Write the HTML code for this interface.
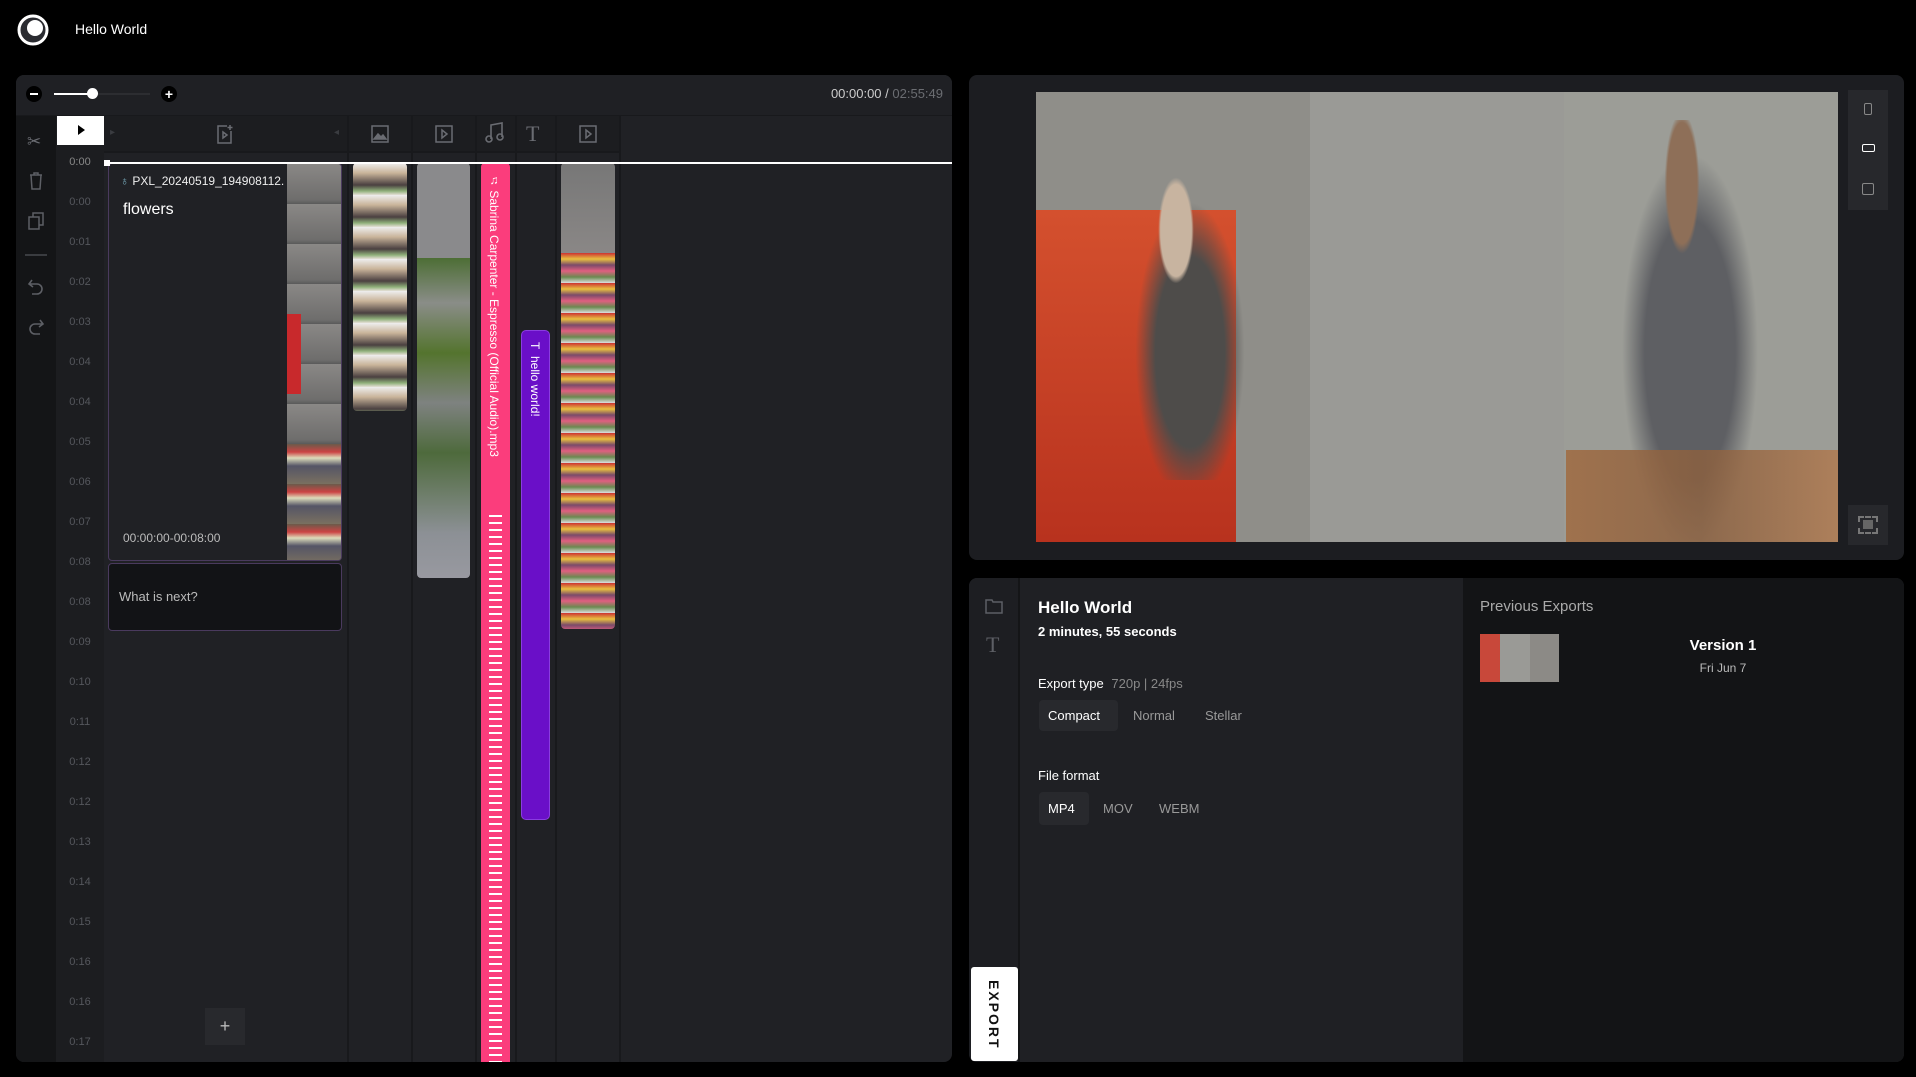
<!DOCTYPE html>
<html><head><meta charset="utf-8"><style>
*{margin:0;padding:0;box-sizing:border-box}
body{width:1916px;height:1077px;background:#000;font-family:"Liberation Sans",sans-serif;color:#fff;position:relative;overflow:hidden}
.a{position:absolute}
.lbl{position:absolute;left:56px;width:48px;text-align:center;font-size:11px;color:#55575d}
.sep{position:absolute;top:116px;bottom:15px;width:2px;background:#18191c}
.ic{position:absolute;color:#6a6c72}
</style></head><body>
<svg class="a" style="left:16px;top:13px" width="34" height="34" viewBox="0 0 34 34"><circle cx="17" cy="17" r="14" fill="#2a2b30" stroke="#fff" stroke-width="3"/><circle cx="19" cy="15" r="8" fill="#fff"/></svg>
<div class="a" style="left:75px;top:21px;font-size:14px">Hello World</div>

<div class="a" style="left:16px;top:75px;width:936px;height:987px;background:#202125;border-radius:8px;overflow:hidden">
  <div class="a" style="left:0;top:41px;width:40px;height:946px;background:#141517"></div>
  <div class="a" style="left:40px;top:41px;width:48px;height:946px;background:#1c1d20"></div>
  <div class="a" style="left:0;top:0;width:936px;height:41px;background:#1f2024;border-bottom:1px solid #18191c"></div>
</div>
<div class="a" style="left:26px;top:86px;width:16px;height:16px;border-radius:50%;background:#000"></div><div class="a" style="left:30px;top:93px;width:8px;height:2px;background:#fff"></div>
<div class="a" style="left:54px;top:93px;width:39px;height:2px;background:#fff"></div>
<div class="a" style="left:93px;top:93px;width:57px;height:2px;background:#2c2d31"></div>
<div class="a" style="left:87px;top:88px;width:11px;height:11px;border-radius:50%;background:#fff"></div>
<div class="a" style="left:161px;top:86px;width:16px;height:16px;border-radius:50%;background:#000;color:#fff;font-size:14px;line-height:16px;text-align:center;font-weight:bold">+</div>
<div class="a" style="left:770px;top:86px;width:173px;text-align:right;font-size:13px;color:#ccc">00:00:00 / <span style="color:#6b6d72">02:55:49</span></div>
<div class="ic" style="left:27px;top:132px;font-size:17px">✂</div>
<svg class="a" style="left:29px;top:172px" width="14" height="18" viewBox="0 0 14 18" fill="none" stroke="#5d5f65" stroke-width="1.5"><path d="M1 3h12M5 3V1h4v2M2 3l1 14h8l1-14"/></svg>
<svg class="a" style="left:28px;top:212px" width="16" height="18" viewBox="0 0 16 18" fill="none" stroke="#5d5f65" stroke-width="1.5"><rect x="1" y="5" width="10" height="12"/><path d="M5 5V1h10v12h-4"/></svg>
<div class="a" style="left:25px;top:254px;width:22px;height:2px;background:#3a3c40"></div>
<svg class="a" style="left:27px;top:278px" width="18" height="18" viewBox="0 0 18 18" fill="none" stroke="#5d5f65" stroke-width="1.6"><path d="M5 2L2 6l4 3M2 6h8a5 5 0 010 10H5"/></svg>
<svg class="a" style="left:27px;top:318px" width="18" height="18" viewBox="0 0 18 18" fill="none" stroke="#5d5f65" stroke-width="1.6"><path d="M13 2l3 4-4 3M16 6H8a5 5 0 000 10h5"/></svg>
<div class="a" style="left:57px;top:116px;width:47px;height:29px;background:#fff"></div>
<div class="a" style="left:78px;top:125px;width:0;height:0;border-left:7px solid #000;border-top:5px solid transparent;border-bottom:5px solid transparent"></div>
<div class="a" style="left:104px;top:116px;width:516px;height:37px;background:#1c1d20;border-bottom:2px solid #18191c"></div>
<div class="a" style="left:110px;top:127px;font-size:10px;color:#3a3c40">▸</div>
<div class="a" style="left:334px;top:127px;font-size:10px;color:#3a3c40">◂</div>
<svg class="a" style="left:216px;top:124px" width="18" height="20" viewBox="0 0 18 20" fill="none" stroke="#6a6c72" stroke-width="1.5"><path d="M11 2H2v17h13V7"/><path d="M7 8l4 3-4 3z"/><path d="M14 1v5M11.5 3.5h5"/></svg>
<svg class="a" style="left:371px;top:125px" width="18" height="18" viewBox="0 0 18 18" fill="none" stroke="#6a6c72" stroke-width="1.5"><rect x="1" y="1" width="16" height="16"/><path d="M3 14l4-5 3 3 2-2 3 4z" fill="#6a6c72"/></svg>
<svg class="a" style="left:435px;top:125px" width="18" height="18" viewBox="0 0 18 18" fill="none" stroke="#6a6c72" stroke-width="1.5"><rect x="1" y="1" width="16" height="16"/><path d="M7 5l5 4-5 4z"/></svg>
<svg class="a" style="left:485px;top:122px" width="20" height="22" viewBox="0 0 20 22" fill="none" stroke="#6a6c72" stroke-width="1.6"><path d="M6 17V3l11-2v14"/><circle cx="4" cy="17" r="3"/><circle cx="15" cy="15" r="3"/></svg>
<div class="ic" style="left:526px;top:121px;font-size:22px;font-family:'Liberation Serif',serif">T</div>
<svg class="a" style="left:579px;top:125px" width="18" height="18" viewBox="0 0 18 18" fill="none" stroke="#6a6c72" stroke-width="1.5"><rect x="1" y="1" width="16" height="16"/><path d="M7 5l5 4-5 4z"/></svg>
<div class="sep" style="left:347px"></div><div class="sep" style="left:411px"></div><div class="sep" style="left:475px"></div><div class="sep" style="left:515px"></div><div class="sep" style="left:555px"></div><div class="sep" style="left:619px"></div>
<div class="lbl" style="top:156px;color:#888">0:00</div>
<div class="lbl" style="top:196px">0:00</div><div class="lbl" style="top:236px">0:01</div><div class="lbl" style="top:276px">0:02</div><div class="lbl" style="top:316px">0:03</div><div class="lbl" style="top:356px">0:04</div><div class="lbl" style="top:396px">0:04</div><div class="lbl" style="top:436px">0:05</div><div class="lbl" style="top:476px">0:06</div><div class="lbl" style="top:516px">0:07</div><div class="lbl" style="top:556px">0:08</div><div class="lbl" style="top:596px">0:08</div><div class="lbl" style="top:636px">0:09</div><div class="lbl" style="top:676px">0:10</div><div class="lbl" style="top:716px">0:11</div><div class="lbl" style="top:756px">0:12</div><div class="lbl" style="top:796px">0:12</div><div class="lbl" style="top:836px">0:13</div><div class="lbl" style="top:876px">0:14</div><div class="lbl" style="top:916px">0:15</div><div class="lbl" style="top:956px">0:16</div><div class="lbl" style="top:996px">0:16</div><div class="lbl" style="top:1036px">0:17</div>
<div class="a" style="left:108px;top:163px;width:234px;height:398px;background:#202125;border:1px solid #4a3a5e;border-radius:4px;overflow:hidden">
  <div class="a" style="right:0;top:0;width:54px;height:398px;background:repeating-linear-gradient(180deg,#8a8886 0,#6e6d6c 36px,#5a5a5a 40px),#777"></div>
  <div class="a" style="right:0;top:150px;width:54px;height:80px;background:linear-gradient(90deg,#c8292c 0 14px,transparent 14px)"></div>
  <div class="a" style="right:0;top:280px;width:54px;height:118px;background:repeating-linear-gradient(180deg,#6b5a4a 0,#c44 8px,#ddb 14px,#556 22px,#7a7060 40px)"></div>
</div>
<div class="a" style="left:120px;top:174px;font-size:12px;color:#eee"><span style="color:#7ab">♁</span> PXL_20240519_194908112.</div>
<div class="a" style="left:123px;top:201px;font-size:16px;color:#fff">flowers</div>
<div class="a" style="left:123px;top:531px;font-size:12px;color:#bbb">00:00:00-00:08:00</div>
<div class="a" style="left:108px;top:563px;width:234px;height:68px;background:#121316;border:1px solid #4a3a5e;border-radius:4px"></div>
<div class="a" style="left:119px;top:589px;font-size:13px;color:#bbb">What is next?</div>
<div class="a" style="left:353px;top:163px;width:54px;height:248px;border-radius:4px;background:repeating-linear-gradient(180deg,#eee 0,#c9b49a 10px,#4a4040 22px,#8fb07a 28px,#e6e0d8 32px)"></div>
<div class="a" style="left:417px;top:163px;width:53px;height:415px;border-radius:4px;background:linear-gradient(180deg,#8a8a8c 0 95px,#4d6e35 95px,#8a8d88 140px,#54742e 190px,#7e8280 240px,#4e6a3c 290px,#8c9095 370px,#9899a0 415px)"></div>
<div class="a" style="left:481px;top:163px;width:29px;height:899px;background:#fb3d7c;border-radius:4px 4px 0 0"></div>
<div class="a" style="left:489px;top:515px;width:13px;height:547px;background:repeating-linear-gradient(180deg,#fff 0 2px,transparent 2px 7px)"></div>
<div class="a" style="left:487px;top:173px;font-size:12px;color:#fff;writing-mode:vertical-rl;white-space:nowrap">♫ Sabrina Carpenter - Espresso (Official Audio).mp3</div>
<div class="a" style="left:521px;top:330px;width:29px;height:490px;background:#6a0fc8;border:1px solid #8a3de0;border-radius:5px"></div>
<div class="a" style="left:528px;top:342px;font-size:12px;color:#fff;writing-mode:vertical-rl;white-space:nowrap">T&nbsp;&nbsp;hello world!</div>
<div class="a" style="left:561px;top:163px;width:54px;height:466px;border-radius:4px;background:linear-gradient(180deg,#777 0,#8a8786 90px,transparent 90px),repeating-linear-gradient(180deg,#c33 0,#e8c040 6px,#7a4a6a 12px,#e06080 18px,#6a8a50 24px,#ddd 30px)"></div>
<div class="a" style="left:106px;top:162px;width:846px;height:2px;background:#fff"></div>
<div class="a" style="left:104px;top:160px;width:6px;height:6px;background:#fff"></div>
<div class="a" style="left:205px;top:1008px;width:40px;height:37px;background:#28292d;color:#bbb;text-align:center;line-height:37px;font-size:18px">+</div>

<div class="a" style="left:969px;top:75px;width:935px;height:485px;background:#1c1d21;border-radius:8px"></div>
<div class="a" style="left:1036px;top:92px;width:802px;height:450px;background:linear-gradient(90deg,#8f8e89 0 274px,#9a9a96 274px 528px,#9c9d97 528px 802px)"></div>
<div class="a" style="left:1036px;top:210px;width:200px;height:332px;background:linear-gradient(180deg,#d4502e,#b8321e);"></div>
<div class="a" style="left:1120px;top:160px;width:140px;height:320px;background:radial-gradient(ellipse at 40% 22%,#c8b4a0 0 13%,transparent 15%),radial-gradient(ellipse at 50% 60%,#4e4c4a 0 35%,transparent 55%)"></div>
<div class="a" style="left:1610px;top:120px;width:160px;height:420px;background:radial-gradient(ellipse at 45% 15%,#8e6f58 0 12%,transparent 14%),radial-gradient(ellipse at 50% 55%,#5e5f63 0 40%,transparent 60%)"></div>
<div class="a" style="left:1566px;top:450px;width:272px;height:92px;background:linear-gradient(90deg,#a06a40,#8a6040 50%,#b07a50);opacity:.85"></div>
<div class="a" style="left:1848px;top:90px;width:40px;height:120px;background:#27282c"></div>
<div class="a" style="left:1864px;top:103px;width:8px;height:12px;border:1.5px solid #888;border-radius:2px"></div>
<div class="a" style="left:1862px;top:144px;width:13px;height:8px;border:1.5px solid #fff;border-radius:2px"></div>
<div class="a" style="left:1862px;top:183px;width:12px;height:12px;border:1.5px solid #888;border-radius:2px"></div>
<div class="a" style="left:1848px;top:505px;width:40px;height:40px;background:#27282c"></div>
<div class="a" style="left:1858px;top:516px;width:20px;height:18px;border:2px dashed #777"></div>
<div class="a" style="left:1863px;top:520px;width:10px;height:9px;background:#666"></div>

<div class="a" style="left:969px;top:578px;width:935px;height:484px;background:#1f2024;border-radius:8px;overflow:hidden">
  <div class="a" style="left:0;top:0;width:51px;height:484px;background:#1d1e22;border-right:2px solid #141517"></div>
  <div class="a" style="left:494px;top:0;width:441px;height:484px;background:#131416"></div>
</div>
<svg class="a" style="left:985px;top:598px" width="18" height="16" viewBox="0 0 18 16" fill="none" stroke="#5d5f65" stroke-width="1.5"><path d="M1 2h6l1 2h9v11H1z"/></svg>
<div class="a" style="left:986px;top:632px;font-size:22px;color:#5d5f65;font-family:'Liberation Serif',serif">T</div>
<div class="a" style="left:971px;top:967px;width:47px;height:94px;background:#fff;border-radius:3px"></div>
<div class="a" style="left:986px;top:980px;font-size:14px;font-weight:bold;color:#111;writing-mode:vertical-rl;letter-spacing:2px">EXPORT</div>
<div class="a" style="left:1038px;top:598px;font-size:17px;font-weight:bold">Hello World</div>
<div class="a" style="left:1038px;top:624px;font-size:13px;font-weight:bold">2 minutes, 55 seconds</div>
<div class="a" style="left:1038px;top:676px;font-size:13px">Export type <span style="color:#888;margin-left:4px">720p | 24fps</span></div>
<div class="a" style="left:1039px;top:700px;width:79px;height:31px;background:#28292d;border-radius:4px"></div>
<div class="a" style="left:1048px;top:708px;font-size:13px">Compact</div>
<div class="a" style="left:1133px;top:708px;font-size:13px;color:#999">Normal</div>
<div class="a" style="left:1205px;top:708px;font-size:13px;color:#999">Stellar</div>
<div class="a" style="left:1038px;top:768px;font-size:13px">File format</div>
<div class="a" style="left:1039px;top:792px;width:50px;height:33px;background:#28292d;border-radius:4px"></div>
<div class="a" style="left:1048px;top:801px;font-size:13px">MP4</div>
<div class="a" style="left:1103px;top:801px;font-size:13px;color:#999">MOV</div>
<div class="a" style="left:1159px;top:801px;font-size:13px;color:#999">WEBM</div>
<div class="a" style="left:1480px;top:598px;font-size:15px;color:#aaa">Previous Exports</div>
<div class="a" style="left:1480px;top:634px;width:79px;height:48px;background:linear-gradient(90deg,#c8483a 0 20px,#9a9a96 20px 50px,#8c8a86 50px)"></div>
<div class="a" style="left:1640px;top:637px;width:166px;text-align:center;font-size:15px;font-weight:bold">Version 1</div>
<div class="a" style="left:1640px;top:661px;width:166px;text-align:center;font-size:12px;color:#bbb">Fri Jun 7</div>
</body></html>
